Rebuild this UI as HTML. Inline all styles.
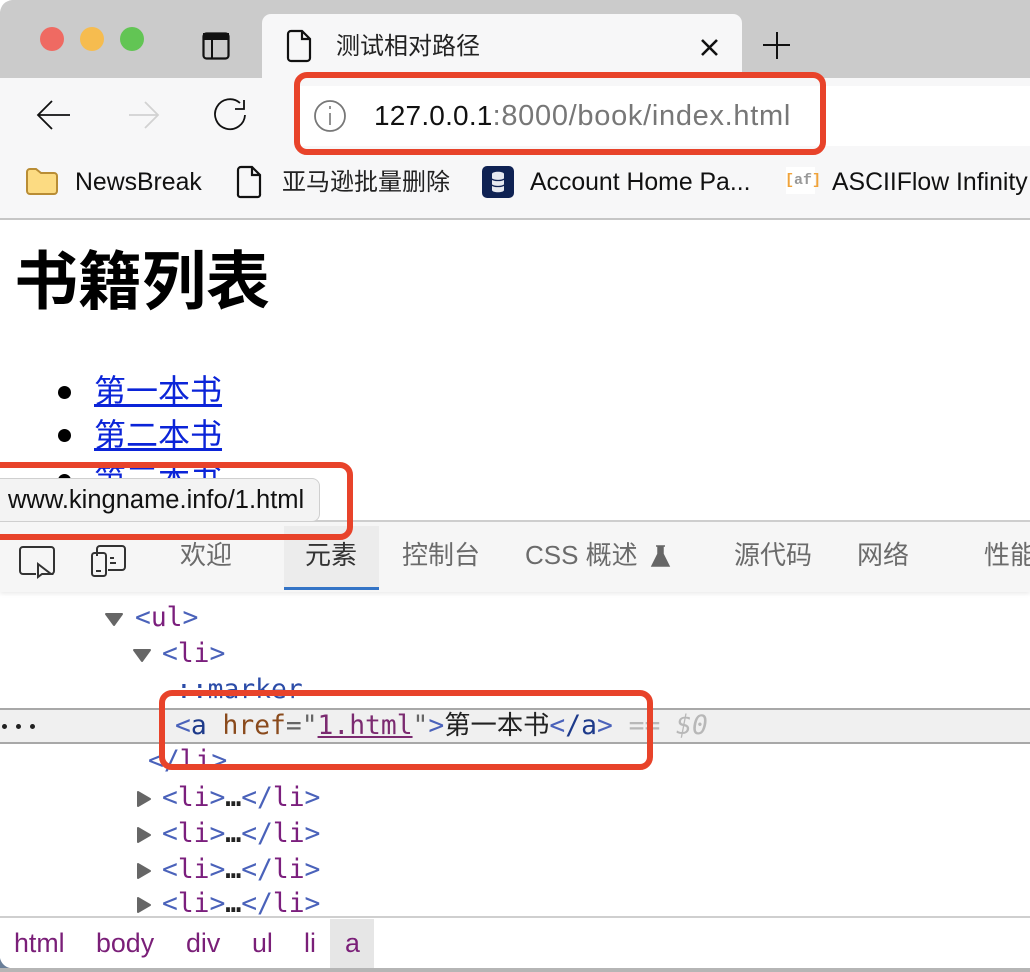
<!DOCTYPE html>
<html><head><meta charset="utf-8">
<style>
html,body{margin:0;padding:0;background:#fff}
#p{position:relative;width:1030px;height:972px;overflow:hidden;background:#fff;font-family:"Liberation Sans","Noto Sans CJK SC",sans-serif}
.a{position:absolute;white-space:nowrap}
.m{position:absolute;white-space:pre;font:26.3px/36px "DejaVu Sans Mono","Noto Sans CJK SC",monospace;color:#4a62ba}
.m i{font-style:normal;color:#7b1f7d}
.m b{font-weight:normal;color:#222}
.m b.e{font-weight:bold}
.t{position:absolute;white-space:nowrap;font-size:26px;line-height:36px;color:#6b6b6b;top:537px}
.bc{position:absolute;white-space:nowrap;font-size:26.8px;line-height:36px;color:#7a1f78;top:925px}
.bm{position:absolute;white-space:nowrap;font-size:24.8px;line-height:36px;color:#111;top:165px}
svg{position:absolute;overflow:visible}
</style></head><body><div id="p">

<div class="a" style="left:0;top:0;width:1030px;height:78px;background:#cbcbcb"></div>
<div class="a" style="left:0;top:0;width:12px;height:12px;background:#fff;clip-path:path('M0 0H12C5 1 1 5 0 12Z')"></div>
<div class="a" style="left:262px;top:14px;width:480px;height:70px;background:#f7f7f8;border-radius:9px 9px 0 0"></div>
<div class="a" style="left:0;top:78px;width:1030px;height:141px;background:#f7f7f8"></div>
<div class="a" style="left:0;top:218px;width:1030px;height:2px;background:#c6c6c6"></div>
<div class="a" style="left:294px;top:86px;width:736px;height:60px;background:#fff"></div>

<div class="a" style="left:40px;top:27px;width:24px;height:24px;border-radius:50%;background:#ef6a62"></div>
<div class="a" style="left:80px;top:27px;width:24px;height:24px;border-radius:50%;background:#f6bc4f"></div>
<div class="a" style="left:120px;top:27px;width:24px;height:24px;border-radius:50%;background:#62c554"></div>

<svg style="left:0;top:0" width="1030" height="220" fill="none" stroke="#111">
<rect x="203.500" y="33.500" width="25" height="25" rx="3" stroke-width="2.200"/>
<path d="M203 33h26v7h-26z" fill="#111" stroke="none"/>
<path d="M212 40v18" stroke-width="2"/>
<path d="M291 31h11l8 8v19a3 3 0 0 1-3 3h-16a3 3 0 0 1-3-3V34a3 3 0 0 1 3-3zM302 31v8h8" stroke-width="2.200"/>
<path d="M702 40l15 15M717 40l-15 15" stroke-width="2.600"/>
<path d="M777 32v27M763 45h27" stroke-width="2"/>
<path d="M70 115H39M52 101L38 115l14 14" stroke-width="1.800"/>
<path d="M129 115h29M145 102l13 13-13 13" stroke="#d2d2d2" stroke-width="1.800"/>
<path d="M240 103a15 15 0 1 0 5 12M244 100v9h-9" stroke-width="1.800"/>
<circle cx="330" cy="116" r="15" stroke="#777" stroke-width="1.800"/>
<path d="M330 113v12M330 106v3" stroke="#777" stroke-width="1.600"/>
<path d="M27 172a3 3 0 0 1 3-3h6l5 4h13a3 3 0 0 1 3 3v15a3 3 0 0 1-3 3H30a3 3 0 0 1-3-3z" fill="#fcdb82" stroke="#b98d35" stroke-width="2"/>
<path d="M241 167h11l8 8v19a2.500 2.500 0 0 1-3 3h-16a2.500 2.500 0 0 1-3-3v-24a3 3 0 0 1 3-3zM252 167v8h8" stroke-width="2.200"/>
<rect x="482" y="166" width="32" height="32" rx="5" fill="#0f2253" stroke="none"/>
<path d="M492 174c0-3 12-3 12 0v16c0 3-12 3-12 0z" fill="#e6e9f0" stroke="none"/>
<path d="M492 179c2 2 10 2 12 0M492 185c2 2 10 2 12 0" stroke="#0f2253" stroke-width="1.300"/>
</svg>

<div class="a" style="left:336px;top:30px;font-size:24px;line-height:34px;color:#222">测试相对路径</div>
<div class="a" style="left:374px;top:98px;font-size:29px;line-height:36px;color:#777;letter-spacing:.7px"><span style="color:#111;font-size:28px;letter-spacing:.2px">127.0.0.1</span>:8000/book/index.html</div>
<div class="bm" style="left:75px">NewsBreak</div>
<div class="bm" style="left:282px;font-size:24px;color:#222">亚马逊批量删除</div>
<div class="bm" style="left:530px">Account Home Pa...</div>
<div class="a" style="left:786px;top:167px;width:29px;height:27px;background:#fff"></div>
<div class="a" style="left:785px;top:171px;font:bold 15px/20px 'Liberation Mono',monospace;color:#999"><span style="color:#f0a33a">[</span>af<span style="color:#f0a33a">]</span></div>
<div class="bm" style="left:832px">ASCIIFlow Infinity</div>

<div class="a" style="left:14px;top:246px;font-size:64px;line-height:72px;font-weight:bold;color:#000">书籍列表</div>
<div class="a" style="left:58px;top:386px;width:13px;height:13px;border-radius:50%;background:#000"></div>
<div class="a" style="left:58px;top:429px;width:13px;height:13px;border-radius:50%;background:#000"></div>
<div class="a" style="left:58px;top:474px;width:13px;height:13px;border-radius:50%;background:#000"></div>
<div class="a" style="left:94px;top:371px;font-size:32px;line-height:40px;color:#0b24d8;text-decoration:underline">第一本书</div>
<div class="a" style="left:94px;top:415px;font-size:32px;line-height:40px;color:#0b24d8;text-decoration:underline">第二本书</div>
<div class="a" style="left:94px;top:460px;font-size:32px;line-height:40px;color:#0b24d8;text-decoration:underline">第三本书</div>

<div class="a" style="left:0;top:520px;width:1030px;height:2px;background:#cfcfcf"></div>
<div class="a" style="left:0;top:522px;width:1030px;height:70px;background:#f6f6f6;box-shadow:0 2px 4px rgba(0,0,0,.08)"></div>
<div class="a" style="left:284px;top:526px;width:95px;height:62px;background:#ececec"></div>
<div class="a" style="left:284px;top:587px;width:95px;height:3px;background:#3474c6"></div>

<div class="a" style="left:-8px;top:478px;width:326px;height:42px;background:#f3f3f3;border:1px solid #cfcfcf;border-radius:8px"></div>
<div class="a" style="left:8px;top:484px;font-size:25.500px;line-height:32px;color:#111">www.kingname.info/1.html</div>

<svg style="left:0;top:0" width="1030" height="620" fill="none" stroke="#333">
<path d="M48 574h3a3 3 0 0 0 3-3v-21a3 3 0 0 0-3-3H23a3 3 0 0 0-3 3v21a3 3 0 0 0 3 3h13" stroke-width="2"/>
<path d="M38 564v13l4-3 9 0z" fill="#f6f6f6" stroke-width="2"/>
<path d="M97 556v-7a3 3 0 0 1 3-3h22a3 3 0 0 1 3 3v18a3 3 0 0 1-3 3h-14M110 563h6M110 558h4" stroke-width="2"/>
<rect x="92" y="553" width="14" height="23" rx="2.500" stroke-width="2"/>
<path d="M96 571h5" stroke-width="2"/>
<path d="M656 546h9M658 546v8l-6 12h17l-6-12v-8" fill="#666" stroke="#666" stroke-width="1.500"/>
</svg>

<div class="t" style="left:180px">欢迎</div>
<div class="t" style="left:305px;color:#333">元素</div>
<div class="t" style="left:402px">控制台</div>
<div class="t" style="left:525px">CSS 概述</div>
<div class="t" style="left:734px">源代码</div>
<div class="t" style="left:857px">网络</div>
<div class="t" style="left:984px">性能</div>

<div class="m" style="left:135px;top:600px">&lt;<i>ul</i>&gt;</div>
<div class="m" style="left:162px;top:636px">&lt;<i>li</i>&gt;</div>
<div class="m" style="left:176px;top:672px;color:#2b4ca8">::marker</div>

<div class="a" style="left:0;top:708px;width:1030px;height:32px;background:#f0f0f0;border-top:2px solid #a8a8a8;border-bottom:2px solid #a8a8a8"></div>
<div class="a" style="left:2px;top:724px;width:5px;height:5px;border-radius:50%;background:#222"></div>
<div class="a" style="left:16px;top:724px;width:5px;height:5px;border-radius:50%;background:#222"></div>
<div class="a" style="left:30px;top:724px;width:5px;height:5px;border-radius:50%;background:#222"></div>
<div class="m" style="left:175px;top:708px">&lt;<span style="color:#1d3a8a">a</span> <span style="color:#8a4a1c">href</span><span style="color:#666">="</span><span style="color:#7b2a70;text-decoration:underline">1.html</span><span style="color:#666">"</span>&gt;<b>第一本书</b>&lt;<span style="color:#1d3a8a">/a</span>&gt; <span style="color:#b8b8b8">== <em>$0</em></span></div>
<div class="m" style="left:148px;top:743px">&lt;/<i>li</i>&gt;</div>
<div class="m" style="left:162px;top:780px">&lt;<i>li</i>&gt;<b class="e">…</b>&lt;/<i>li</i>&gt;</div>
<div class="m" style="left:162px;top:816px">&lt;<i>li</i>&gt;<b class="e">…</b>&lt;/<i>li</i>&gt;</div>
<div class="m" style="left:162px;top:852px">&lt;<i>li</i>&gt;<b class="e">…</b>&lt;/<i>li</i>&gt;</div>
<div class="m" style="left:162px;top:886px">&lt;<i>li</i>&gt;<b class="e">…</b>&lt;/<i>li</i>&gt;</div>

<svg style="left:0;top:0" width="300" height="972" fill="#666" stroke="#666" stroke-width="2" stroke-linejoin="round">
<path d="M106 614h16l-8 11z"/>
<path d="M134 650h16l-8 11z"/>
<path d="M138 792v14l12-7z"/>
<path d="M138 828v14l12-7z"/>
<path d="M138 864v14l12-7z"/>
<path d="M138 898v14l12-7z"/>
</svg>

<div class="a" style="left:0;top:916px;width:1030px;height:2px;background:#cfcfcf"></div>
<div class="a" style="left:0;top:918px;width:1030px;height:54px;background:#fff"></div>
<div class="a" style="left:330px;top:919px;width:44px;height:49px;background:#e6e6e6"></div>
<div class="bc" style="left:14px">html</div>
<div class="bc" style="left:96px">body</div>
<div class="bc" style="left:186px">div</div>
<div class="bc" style="left:252px">ul</div>
<div class="bc" style="left:304px">li</div>
<div class="bc" style="left:345px">a</div>
<div class="a" style="left:0;top:968px;width:1030px;height:4px;background:#b5b5b5"></div>
<div class="a" style="left:0;top:958px;width:10px;height:10px;background:#6a7f99;clip-path:path('M0 0C1 5 5 9 10 10H0Z')"></div>

<svg style="left:0;top:0" width="1030" height="972" fill="none" stroke="#e8432a" stroke-width="6">
<path d="M310 75H813a10 10 0 0 1 10 10V142a10 10 0 0 1-10 10H307a10 10 0 0 1-10-10V85a10 10 0 0 1 10-10z"/>
<path d="M-10 465H340a10 10 0 0 1 10 10V527a10 10 0 0 1-10 10H-10"/>
<path d="M172 693H640a10 10 0 0 1 10 10V757a10 10 0 0 1-10 10H172a10 10 0 0 1-10-10V703a10 10 0 0 1 10-10z"/>
</svg>
</div></body></html>
